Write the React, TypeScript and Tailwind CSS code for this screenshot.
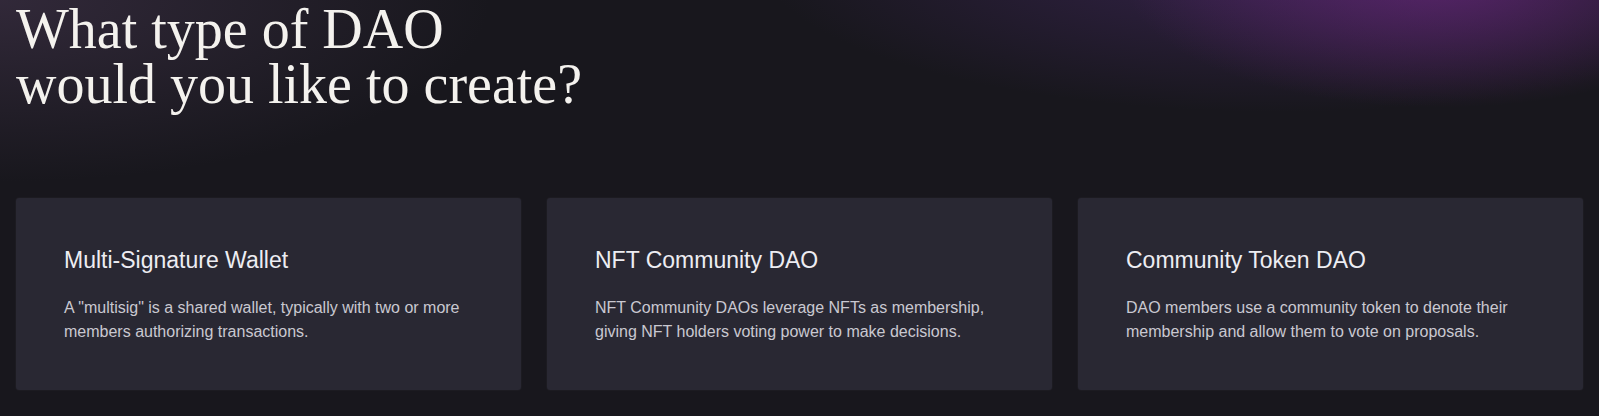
export default function App() {
  const types = [
    {
      title: "Multi-Signature Wallet",
      description: 'A "multisig" is a shared wallet, typically with two or more members authorizing transactions.',
    },
    {
      title: "NFT Community DAO",
      description: "NFT Community DAOs leverage NFTs as membership, giving NFT holders voting power to make decisions.",
    },
    {
      title: "Community Token DAO",
      description: "DAO members use a community token to denote their membership and allow them to vote on proposals.",
    },
  ];

  return (
    <div className="relative min-h-[416px] overflow-hidden bg-[#18171d] font-['Liberation_Sans',Arial,sans-serif]">
      {/* background glows */}
      <div className="pointer-events-none absolute inset-0 bg-[radial-gradient(ellipse_700px_260px_at_0px_0px,rgba(70,55,80,0.55),transparent_70%)]" />
      <div className="pointer-events-none absolute inset-0 bg-[radial-gradient(ellipse_420px_170px_at_1440px_-20px,rgba(115,40,135,0.6),transparent_75%),radial-gradient(ellipse_650px_190px_at_1280px_-40px,rgba(72,42,105,0.6),transparent_80%)]" />

      <div className="relative px-4 pt-[2px] pb-6">
        <h1 className="font-['Liberation_Serif','Times_New_Roman',serif] text-[56px] leading-[55px] font-normal text-[#f4f2ee]">
          What type of DAO
          <br />
          would you like to create?
        </h1>

        <div className="mt-[86px] grid grid-cols-3 gap-[26px]">
          {types.map((t, i) => (
            <div key={i} className="rounded-[3px] bg-[#292833] px-12 pt-12 pb-[46px] shadow-[0_0_0_1px_rgba(255,255,255,0.02)]">
              <h3 className="mb-[22px] text-[23px] leading-7 text-[#ededf2]">{t.title}</h3>
              <p className="max-w-[400px] text-base leading-6 text-[#c9c8d1]">{t.description}</p>
            </div>
          ))}
        </div>
      </div>
    </div>
  );
}
